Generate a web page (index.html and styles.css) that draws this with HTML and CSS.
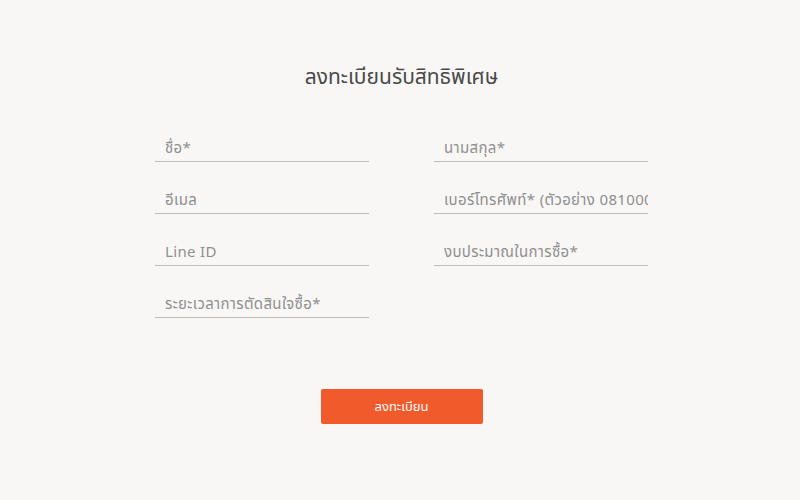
FILE: index.html
```html
<!DOCTYPE html>
<html lang="th">
<head>
  <meta charset="UTF-8" />
  <meta name="viewport" content="width=device-width, initial-scale=1.0"/>
  <title>ลงทะเบียนรับสิทธิพิเศษ</title>
  <link rel="stylesheet" href="styles.css">
</head>
<body>

  <div class="register-box">
    <h2>ลงทะเบียนรับสิทธิพิเศษ</h2>
    <form class="register-form" onsubmit="return false;">
      <input type="text" placeholder="ชื่อ*" />
      <input type="text" placeholder="นามสกุล*" />
      <input type="email" placeholder="อีเมล" />
      <input type="tel" placeholder="เบอร์โทรศัพท์* (ตัวอย่าง 0810000000)" />
      <input type="text" placeholder="Line ID" />
      <input type="text" placeholder="งบประมาณในการซื้อ*" />
      <input type="text" placeholder="ระยะเวลาการตัดสินใจซื้อ*" />
    </form>
    <button type="button">ลงทะเบียน</button>
  </div>

</body>
</html>
```

FILE: styles.css
```css
* { margin: 0; padding: 0; box-sizing: border-box; }
body {
  font-family: 'Noto Sans Thai', 'Noto Sans', sans-serif;
  background: #f8f7f5;
  height: 100vh;
}
.register-box {
  width: 493px;
  margin-left: calc(50% - 245px);
  padding-top: 62px;
  display: flex;
  flex-direction: column;
  align-items: center;
}
h2 {
  font-size: 21px;
  font-weight: 400;
  color: #4a4a4a;
  margin-bottom: 41px;
}
.register-form {
  width: 100%;
  display: grid;
  grid-template-columns: 214px 214px;
  justify-content: space-between;
  row-gap: 24px;
}
input {
  width: 100%;
  height: 28px;
  padding: 2px 0 0 10px;
  border: none;
  border-bottom: 1px solid #bdbdbd;
  background: transparent;
  font-family: inherit;
  font-size: 15px;
  letter-spacing: 0.35px;
  color: #555;
  outline: none;
}
input::placeholder { color: #8f8f8f; }
button {
  width: 162px;
  height: 35px;
  margin-top: 71px;
  background-color: #f15a2b;
  color: #fff;
  border: none;
  border-radius: 2px;
  font-family: inherit;
  font-size: 13px;
  cursor: pointer;
}
button:hover { background-color: #e04e20; }
```
